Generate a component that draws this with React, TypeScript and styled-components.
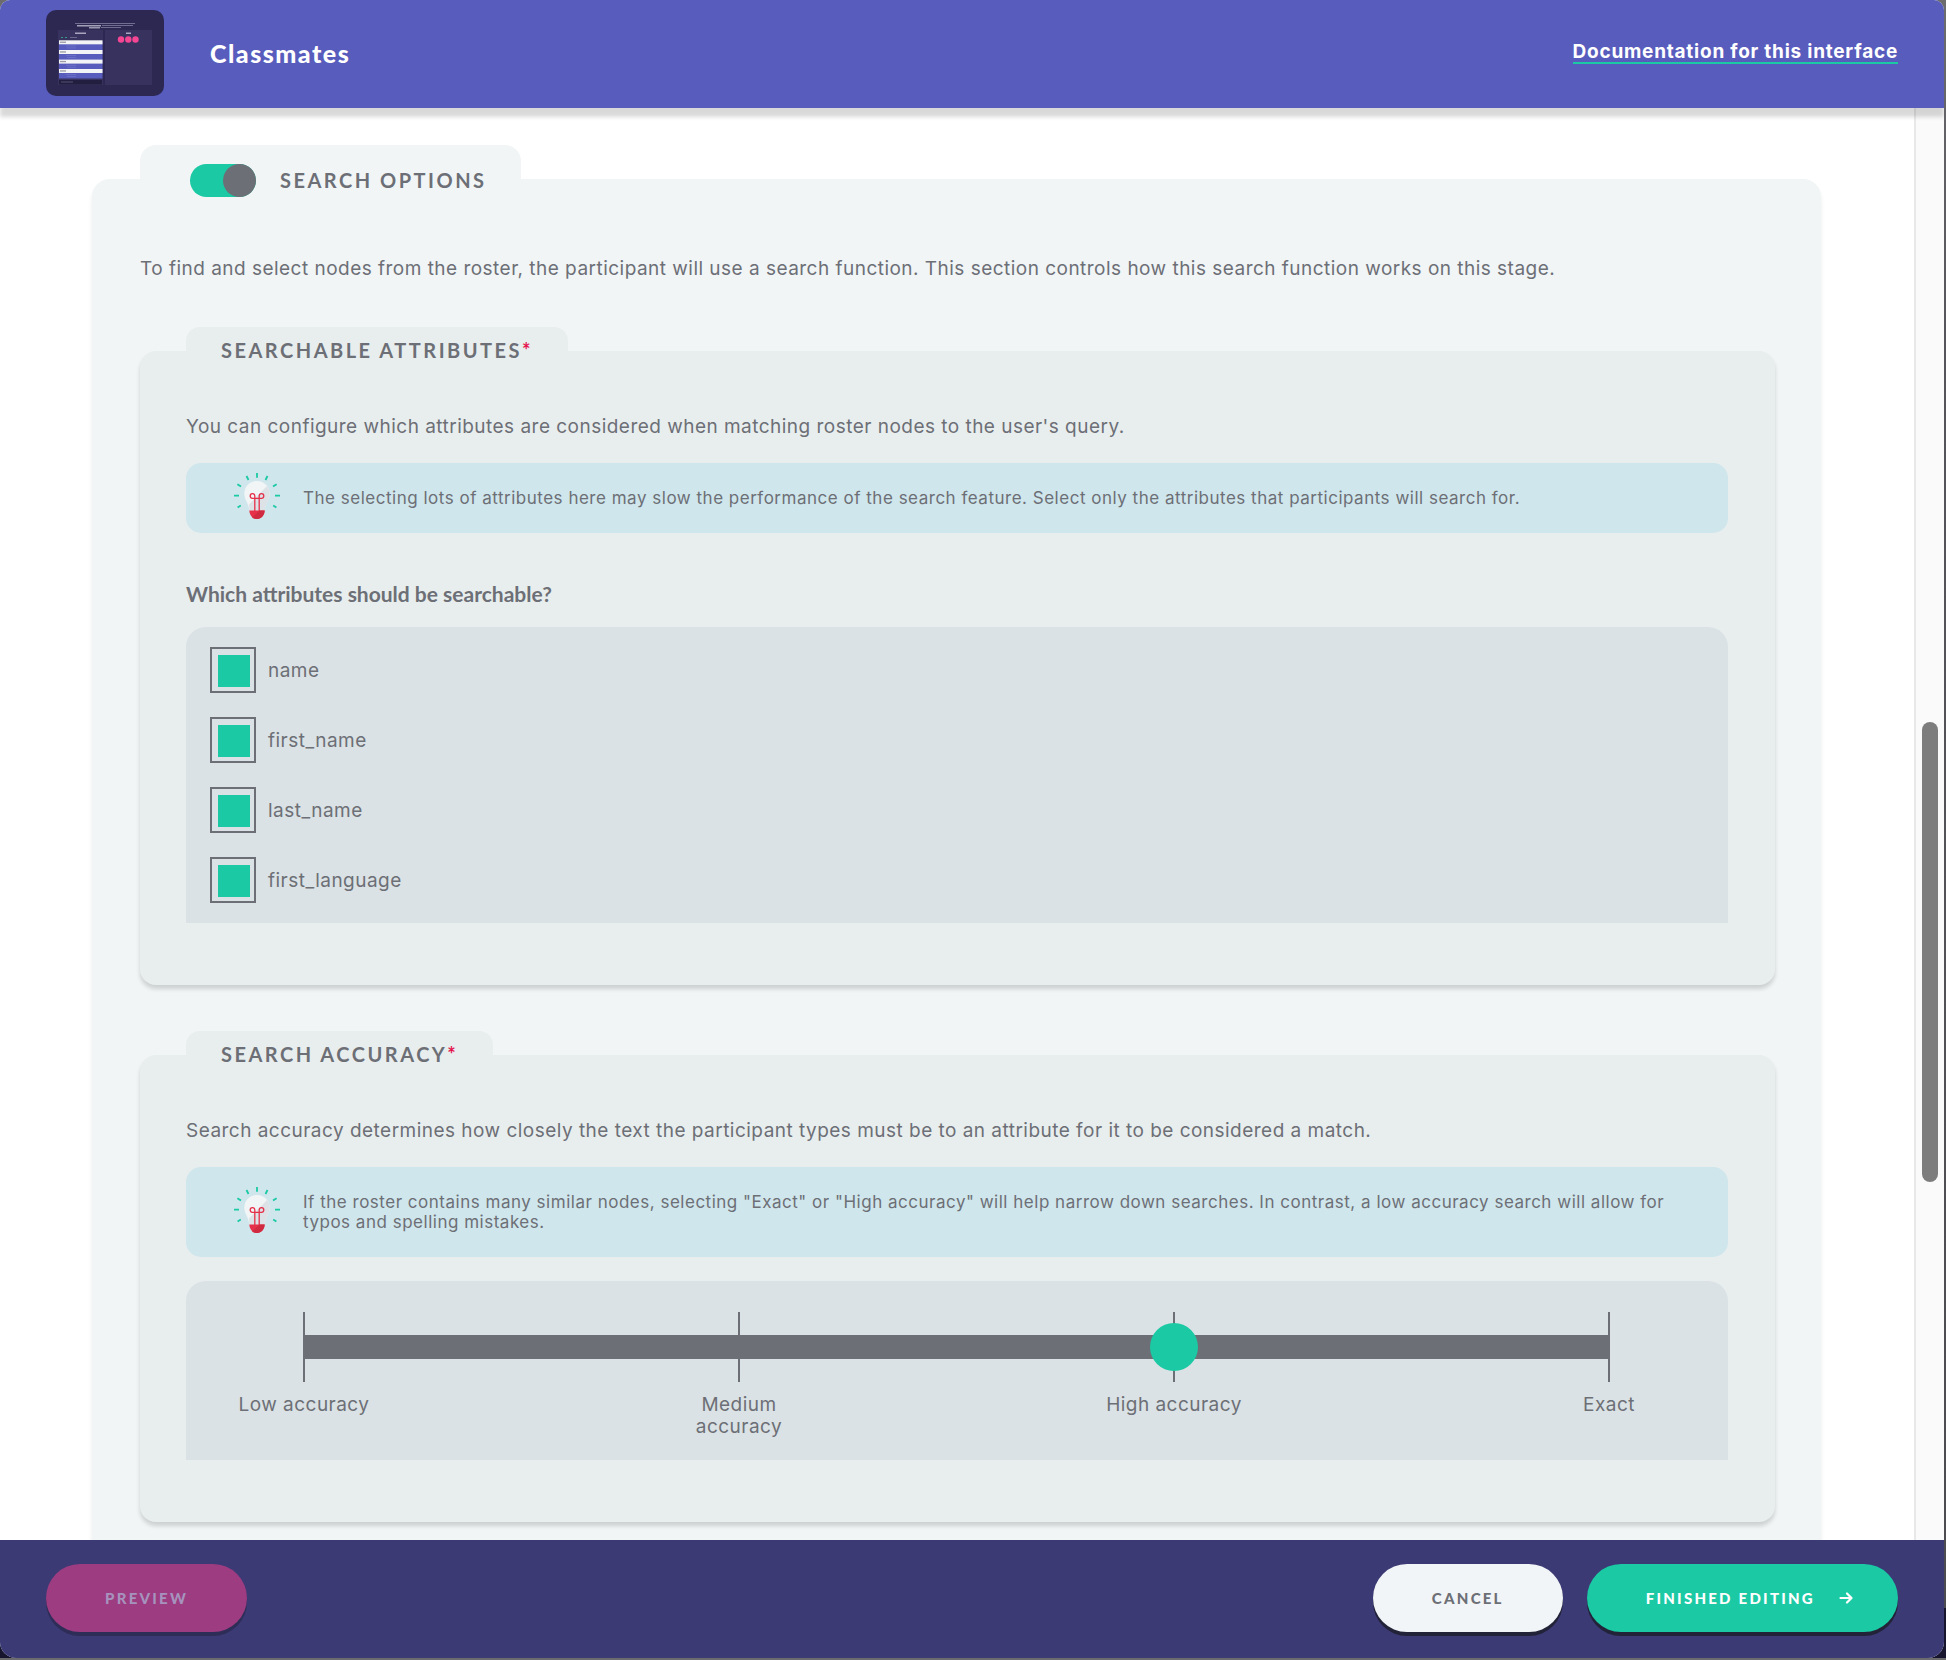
import React, { useState } from "react";
import styled, { createGlobalStyle } from "styled-components";

const color = {
  header: "#575cbd",
  footer: "#3b3a75",
  mint: "#1bc9a4",
  text: "#6d6f76",
  section: "#f1f5f6",
  panel: "#e8eeee",
  field: "#dae2e5",
  tip: "#cfe6ec",
  required: "#e5144f",
};

const heading = `"Lato", "Open Sans", sans-serif`;
const body = `"Inter", "Liberation Sans", sans-serif`;

const GlobalStyle = createGlobalStyle`
  * { box-sizing: border-box; }
  body {
    margin: 0;
    background: linear-gradient(#6c6c6e 0, #55555b 20%, #4c4c50 97%, #17162e 97%);
    color: ${color.text};
    font-family: ${body};
    font-size: 19px;
    letter-spacing: 0.025em;
  }
  h1, h2, h3, p { margin: 0; }
`;

const Shell = styled.div`
  display: flex;
  flex-direction: column;
  height: calc(100vh - 2px);
  margin-right: 2px;
  border-radius: 10px 10px 16px 16px;
  overflow: hidden;
  background: #fff;
`;

const Header = styled.header`
  display: flex;
  align-items: center;
  flex: none;
  height: 108px;
  padding: 0 46px 2px;
  background: ${color.header};
  color: #fff;
  box-shadow: 0 9px 4px rgba(0, 0, 0, 0.15);
  z-index: 1;
`;

const StageThumb = styled.svg`
  width: 118px;
  height: 86px;
  flex: none;
`;

const StageName = styled.h1`
  flex: 1;
  padding-left: 46px;
  font: 900 25px/32px ${heading};
  letter-spacing: 0.06em;
`;

const DocLink = styled.a`
  border-bottom: 2px solid ${color.mint};
  color: #fff;
  font-weight: 700;
  letter-spacing: 0.04em;
  line-height: 20px;
  text-decoration: none;
`;

const Body = styled.div`
  display: flex;
  flex: 1;
  min-height: 0;
`;

const Content = styled.main`
  flex: 1;
  overflow: hidden;
  padding: 71px 93px 0 92px;
`;

const ScrollRail = styled.div`
  display: flex;
  flex-direction: column;
  align-items: center;
  width: 30px;
  border-left: 2px solid #e8e8e8;
  background: #fafafa;
`;

const RailSpace = styled.div<{ $grow: number }>`
  flex: ${(p) => p.$grow} 0 0;
`;

const RailThumb = styled.div`
  flex: 460 0 0;
  width: 16px;
  border-radius: 8px;
  background: #7d7d7d;
`;

const Section = styled.section`
  display: flex;
  flex-direction: column;
  padding: 0 46px 46px 48px;
  border-radius: 18px 18px 0 0;
  background: ${color.section};
  box-shadow: 0 4px 4px rgba(0, 0, 0, 0.08);
`;

const SectionTab = styled.div`
  display: flex;
  align-items: center;
  gap: 24px;
  width: fit-content;
  height: 70px;
  margin: -34px 0 39px;
  padding: 0 34px 0 50px;
  border-radius: 16px;
  background: ${color.section};
`;

const SectionTitle = styled.h2`
  font: 700 20px/28px ${heading};
  letter-spacing: 0.125em;
  text-transform: uppercase;
`;

const Toggle = styled.input`
  appearance: none;
  display: flex;
  width: 66px;
  height: 33px;
  margin: 0;
  border-radius: 17px;
  background: #b9bdc2;
  cursor: pointer;
  &::before {
    content: "";
    width: 33px;
    height: 33px;
    border-radius: 50%;
    background: ${color.text};
  }
  &:checked {
    justify-content: flex-end;
    background: ${color.mint};
  }
`;

const Paragraph = styled.p`
  line-height: 30px;
`;

const Panels = styled.div`
  display: flex;
  flex-direction: column;
  gap: 70px;
  margin-top: 67px;
`;

const Panel = styled.section`
  display: flex;
  flex-direction: column;
  padding: 0 47px 62px 46px;
  border-radius: 16px;
  background: ${color.panel};
  box-shadow: 0 4px 4px rgba(0, 0, 0, 0.15);
`;

const PanelTitle = styled.h3`
  width: fit-content;
  height: 48px;
  margin: -24px 0 37px;
  padding: 0 35px;
  border-radius: 14px;
  background: ${color.panel};
  font: 700 20px/46px ${heading};
  letter-spacing: 0.125em;
  text-transform: uppercase;
`;

const Required = styled.span`
  color: ${color.required};
`;

const TipBox = styled.aside`
  display: flex;
  align-items: center;
  gap: 23px;
  margin: 21px 0 24px;
  padding: 10px 48px;
  min-height: 70px;
  border-radius: 15px;
  background: ${color.tip};
  font-size: 17px;
  letter-spacing: 0.03em;
  line-height: 20px;
`;

const TipText = styled.p`
  padding: 15px 0;
`;

const BulbSvg = styled.svg`
  flex: none;
  width: 46px;
  height: 50px;
`;

const Question = styled.legend`
  padding: 23px 0 19px;
  font: 700 21px/28px ${heading};
  letter-spacing: 0;
`;

const FieldSet = styled.fieldset`
  margin: 0;
  padding: 0;
  border: 0;
  min-width: 0;
`;

const Field = styled.div`
  border-radius: 20px 20px 0 0;
  background: ${color.field};
`;

const CheckList = styled(Field)`
  display: flex;
  flex-direction: column;
  gap: 24px;
  padding: 20px 24px;
`;

const CheckRow = styled.label`
  display: flex;
  align-items: center;
  gap: 12px;
  width: fit-content;
  cursor: pointer;
`;

const CheckInput = styled.input`
  appearance: none;
  width: 46px;
  height: 46px;
  margin: 0;
  padding: 6px 4px 4px 6px;
  border: 2px solid ${color.text};
  background-clip: content-box;
  &:checked {
    background-color: ${color.mint};
  }
`;

const SliderField = styled(Field)`
  padding: 31px 118px 22px 117px;
`;

const SliderTrack = styled.div`
  display: grid;
  align-items: center;
`;

const Ticks = styled.div`
  grid-area: 1 / 1;
  display: flex;
  justify-content: space-between;
`;

const Tick = styled.span`
  width: 2px;
  height: 70px;
  background: ${color.text};
`;

const Bar = styled.div`
  grid-area: 1 / 1;
  height: 24px;
  background: ${color.text};
`;

const Range = styled.input`
  grid-area: 1 / 1;
  appearance: none;
  height: 48px;
  margin: 0 -23px;
  background: transparent;
  cursor: pointer;
  &::-webkit-slider-thumb {
    appearance: none;
    width: 48px;
    height: 48px;
    border-radius: 50%;
    background: ${color.mint};
  }
`;

const TickLabels = styled.div`
  display: flex;
  justify-content: space-between;
  height: 44px;
  margin-top: 12px;
`;

const TickLabel = styled.span`
  display: flex;
  justify-content: center;
  width: 2px;
  line-height: 22px;
  text-align: center;
  & > span {
    flex: none;
    width: 144px;
  }
`;

const Footer = styled.footer`
  display: flex;
  align-items: flex-start;
  gap: 24px;
  flex: none;
  height: 118px;
  padding: 24px 46px;
  background: ${color.footer};
`;

const Spacer = styled.div`
  flex: 1;
`;

const Button = styled.button<{ $bg: string; $fg: string; $shadow: string }>`
  display: flex;
  align-items: center;
  gap: 24px;
  height: 68px;
  padding: 0 59px;
  border: 0;
  border-radius: 34px;
  background: ${(p) => p.$bg};
  box-shadow: 0 4px 0 ${(p) => p.$shadow};
  color: ${(p) => p.$fg};
  font: 900 15px/20px ${heading};
  letter-spacing: 0.15em;
  text-transform: uppercase;
  cursor: pointer;
  & > svg {
    width: 14px;
    height: 14px;
    margin-right: -14px;
  }
`;

function Thumbnail() {
  return (
    <StageThumb viewBox="0 0 118 86" role="img" aria-label="Name generator stage">
      <rect width="118" height="86" rx="10" fill="#2c2852" />
      <g fill="#8f8bab" opacity=".7">
        <rect x="29" y="13" width="60" height="1" />
        <rect x="31" y="15" width="24" height="1.5" fill="#d5d3e2" />
        <rect x="56" y="15" width="31" height="1" />
        <rect x="43" y="17" width="11" height="1.5" fill="#c4c2d6" />
        <rect x="55" y="17" width="20" height="1" />
      </g>
      <rect x="12" y="20" width="45" height="55" fill="#38325f" />
      <rect x="59" y="20" width="47" height="55" fill="#38325f" />
      <rect x="29" y="22.500" width="11" height="1.500" fill="#aaa6bf" />
      <rect x="80" y="22.500" width="5" height="1.500" fill="#aaa6bf" />
      <rect x="15" y="27" width="2" height="1" fill="#3fa" opacity=".5" />
      <rect x="19" y="27" width="2" height="1" fill="#3fa" opacity=".5" />
      <rect x="24" y="27" width="7" height="1" fill="#8f8bab" opacity=".6" />
      <rect x="13" y="31" width="43.500" height="37.500" fill="#575cbd" />
      {[30.3, 40, 49.6, 59].map((y) => (
        <g key={y}>
          <rect x="13" y={y} width="43.500" height="4" fill="#f3f4f6" />
          <rect x="14" y={y + 1.3} width="6" height="1.300" fill="#9b9ca6" />
          <rect x="20" y={y + 5.2} width="10" height=".8" fill="#6f74c8" />
          <rect x="21" y={y + 7.2} width="9" height=".8" fill="#6f74c8" />
        </g>
      ))}
      <rect x="13" y="70" width="43" height="4.500" fill="#211e3f" />
      <rect x="15" y="71.500" width="12" height="1" fill="#56527a" />
      <g fill="#f44693">
        <circle cx="75" cy="29.500" r="3.200" />
        <circle cx="82.300" cy="29.500" r="3.200" />
        <circle cx="89.500" cy="29.500" r="3.200" />
      </g>
    </StageThumb>
  );
}

function Bulb() {
  return (
    <BulbSvg viewBox="0 0 46 50" aria-hidden="true">
      <path
        d="M23 0v4.700M12.500 3l2 4M33.500 3l-2 4M3.400 11.200l3.600 2.400M42.600 11.200L39 13.600M0 22.700h5M41 22.700h5M3.600 34.500l3.200-2M42.400 34.500l-3.200-2"
        stroke="#1bc9a4"
        strokeWidth="1.800"
        fill="none"
      />
      <path d="M23 8c-7.200 0-12.700 5.600-12.700 12.800 0 6.200 4.700 9.500 5 17.200h15.400c.3-7.700 5-11 5-17.200C35.700 13.600 30.200 8 23 8z" fill="#f1f5f6" />
      <path d="M33 13L15 31.500c.3 2 .4 4 .4 6.500h15.300c.3-7.700 5-11 5-17.200 0-3-1-5.800-2.700-7.800z" fill="#dce2e5" />
      <path
        d="M20.800 38V22.800a2.300 2.300 0 1 0-2.300 2.500h9a2.300 2.300 0 1 0-2.300-2.500V38"
        stroke="#e6304a"
        strokeWidth="1.300"
        fill="none"
      />
      <path d="M15.300 37.600h15.400c-.4 5-3.300 8.400-7.700 8.400s-7.300-3.400-7.700-8.400z" fill="#e6304a" />
      <path d="M30.700 37.600h-5L18 44.700c1.300.9 3 1.300 5 1.300 4.400 0 7.300-3.400 7.700-8.400z" fill="#cf2a3f" />
    </BulbSvg>
  );
}

function Tip({ children }: { children: React.ReactNode }) {
  return (
    <TipBox>
      <Bulb />
      <TipText>{children}</TipText>
    </TipBox>
  );
}

const attributes = ["name", "first_name", "last_name", "first_language"];
const accuracies = ["Low accuracy", "Medium accuracy", "High accuracy", "Exact"];

export default function App() {
  const [enabled, setEnabled] = useState(true);
  const [selected, setSelected] = useState<string[]>(attributes);
  const [accuracy, setAccuracy] = useState(2);

  const toggle = (name: string) =>
    setSelected((prev) => (prev.includes(name) ? prev.filter((n) => n !== name) : [...prev, name]));

  return (
    <>
      <GlobalStyle />
      <Shell>
        <Header>
          <Thumbnail />
          <StageName>Classmates</StageName>
          <DocLink href="#documentation">Documentation for this interface</DocLink>
        </Header>
        <Body>
          <Content>
            <Section>
              <SectionTab>
                <Toggle
                  id="search-options"
                  type="checkbox"
                  checked={enabled}
                  onChange={(e) => setEnabled(e.target.checked)}
                />
                <SectionTitle>
                  <label htmlFor="search-options">Search Options</label>
                </SectionTitle>
              </SectionTab>
              <Paragraph>
                To find and select nodes from the roster, the participant will use a search function. This section
                controls how this search function works on this stage.
              </Paragraph>
              <Panels>
                <Panel>
                  <PanelTitle>
                    Searchable Attributes<Required>*</Required>
                  </PanelTitle>
                  <Paragraph>
                    You can configure which attributes are considered when matching roster nodes to the user's query.
                  </Paragraph>
                  <Tip>
                    The selecting lots of attributes here may slow the performance of the search feature. Select only
                    the attributes that participants will search for.
                  </Tip>
                  <FieldSet>
                    <Question>Which attributes should be searchable?</Question>
                    <CheckList>
                      {attributes.map((name) => (
                        <CheckRow key={name}>
                          <CheckInput
                            type="checkbox"
                            checked={selected.includes(name)}
                            onChange={() => toggle(name)}
                          />
                          {name}
                        </CheckRow>
                      ))}
                    </CheckList>
                  </FieldSet>
                </Panel>
                <Panel>
                  <PanelTitle>
                    Search Accuracy<Required>*</Required>
                  </PanelTitle>
                  <Paragraph>
                    Search accuracy determines how closely the text the participant types must be to an attribute for
                    it to be considered a match.
                  </Paragraph>
                  <Tip>
                    If the roster contains many similar nodes, selecting "Exact" or "High accuracy" will help narrow
                    down searches. In contrast, a low accuracy search will allow for typos and spelling mistakes.
                  </Tip>
                  <SliderField>
                    <SliderTrack>
                      <Ticks>
                        {accuracies.map((label) => (
                          <Tick key={label} />
                        ))}
                      </Ticks>
                      <Bar />
                      <Range
                        type="range"
                        min={0}
                        max={3}
                        step={1}
                        value={accuracy}
                        aria-label="Search accuracy"
                        onChange={(e) => setAccuracy(Number(e.target.value))}
                      />
                    </SliderTrack>
                    <TickLabels>
                      {accuracies.map((label) => (
                        <TickLabel key={label}>
                          <span>{label}</span>
                        </TickLabel>
                      ))}
                    </TickLabels>
                  </SliderField>
                </Panel>
              </Panels>
            </Section>
          </Content>
          <ScrollRail aria-hidden="true">
            <RailSpace $grow={614} />
            <RailThumb />
            <RailSpace $grow={358} />
          </ScrollRail>
        </Body>
        <Footer>
          <Button type="button" disabled $bg="#9d3c81" $fg="#a693bd" $shadow="#2e2d58">
            Preview
          </Button>
          <Spacer />
          <Button type="button" $bg="#f2f5f7" $fg={color.text} $shadow="#222239">
            Cancel
          </Button>
          <Button type="button" $bg={color.mint} $fg="#fff" $shadow="#222239">
            Finished Editing
            <svg viewBox="0 0 14 14" aria-hidden="true">
              <path
                d="M1.500 7h10.500M8 2.500L12.500 7 8 11.500"
                fill="none"
                stroke="currentColor"
                strokeWidth="2.200"
                strokeLinecap="round"
                strokeLinejoin="round"
              />
            </svg>
          </Button>
        </Footer>
      </Shell>
    </>
  );
}
